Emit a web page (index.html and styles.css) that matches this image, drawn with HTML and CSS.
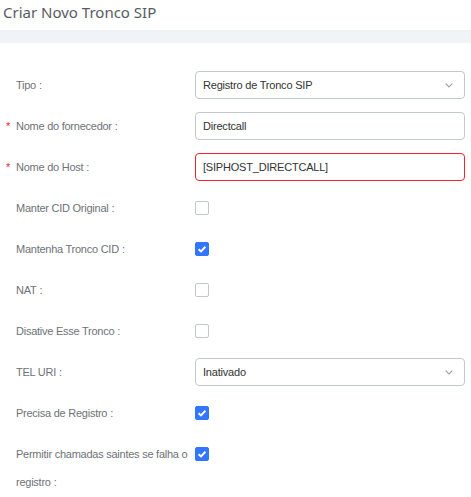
FILE: index.html
```html
<!DOCTYPE html>
<html>
<head>
<meta charset="utf-8">
<link rel="stylesheet" href="styles.css">
</head>
<body>
<div class="page">
  <div class="title">Criar Novo Tronco SIP</div>
  <div class="band"></div>
  <form class="form">
    <div class="row">
      <div class="label">Tipo<span class="colon">:</span></div>
      <div class="control">
        <div class="select"><span>Registro de Tronco SIP</span>
          <svg class="arrow" width="8" height="5" viewBox="0 0 8 5"><path d="M0.7 0.7 L4 4 L7.3 0.7" fill="none" stroke="#9aa0a8" stroke-width="1.1"/></svg>
        </div>
      </div>
    </div>
    <div class="row">
      <div class="label"><span class="req">*</span>Nome do fornecedor<span class="colon">:</span></div>
      <div class="control"><div class="input">Directcall</div></div>
    </div>
    <div class="row">
      <div class="label"><span class="req">*</span>Nome do Host<span class="colon">:</span></div>
      <div class="control"><div class="input error">[SIPHOST_DIRECTCALL]</div></div>
    </div>
    <div class="row">
      <div class="label">Manter CID Original<span class="colon">:</span></div>
      <div class="control"><span class="cb"></span></div>
    </div>
    <div class="row">
      <div class="label">Mantenha Tronco CID<span class="colon">:</span></div>
      <div class="control"><span class="cb on"><svg width="14" height="14" viewBox="0 0 14 14"><path d="M3.6 7.2 L6 9.4 L10.4 4.8" fill="none" stroke="#fff" stroke-width="2"/></svg></span></div>
    </div>
    <div class="row">
      <div class="label">NAT<span class="colon">:</span></div>
      <div class="control"><span class="cb"></span></div>
    </div>
    <div class="row">
      <div class="label">Disative Esse Tronco<span class="colon">:</span></div>
      <div class="control"><span class="cb"></span></div>
    </div>
    <div class="row">
      <div class="label">TEL URI<span class="colon">:</span></div>
      <div class="control">
        <div class="select"><span>Inativado</span>
          <svg class="arrow" width="8" height="5" viewBox="0 0 8 5"><path d="M0.7 0.7 L4 4 L7.3 0.7" fill="none" stroke="#9aa0a8" stroke-width="1.1"/></svg>
        </div>
      </div>
    </div>
    <div class="row">
      <div class="label">Precisa de Registro<span class="colon">:</span></div>
      <div class="control"><span class="cb on"><svg width="14" height="14" viewBox="0 0 14 14"><path d="M3.6 7.2 L6 9.4 L10.4 4.8" fill="none" stroke="#fff" stroke-width="2"/></svg></span></div>
    </div>
    <div class="row top">
      <div class="label">Permitir chamadas saintes se falha o registro<span class="colon">:</span></div>
      <div class="control"><span class="cb on"><svg width="14" height="14" viewBox="0 0 14 14"><path d="M3.6 7.2 L6 9.4 L10.4 4.8" fill="none" stroke="#fff" stroke-width="2"/></svg></span></div>
    </div>
  </form>
</div>
</body>
</html>
```

FILE: styles.css
```css
* { box-sizing: border-box; }
html, body { margin: 0; padding: 0; background: #fff; }
body {
  font-family: "Liberation Sans", Arial, sans-serif;
  font-size: 11px;
  letter-spacing: -0.25px;
  color: #666;
  overflow: hidden;
}
.page { width: 471px; }
.title {
  height: 30px;
  line-height: 24px;
  padding-left: 3px;
  font-family: "Noto Sans", sans-serif;
  font-size: 15px;
  letter-spacing: 0;
  color: #575b62;
}
.band {
  height: 13px;
  background: #f1f4f7;
}
.form {
  margin: 0;
  padding: 28px 0 0 0;
}
.row {
  display: flex;
  align-items: center;
  min-height: 28px;
  margin-bottom: 13px;
}
.row.top { align-items: flex-start; }
.label {
  width: 195px;
  padding-left: 16px;
  padding-right: 2px;
  line-height: 28px;
  color: #6e7277;
}
.req {
  display: inline-block;
  width: 10px;
  margin-left: -10px;
  line-height: 1;
  color: #f5222d;
  font-size: 11px;
}
.colon { margin-left: 3px; }
.control {
  width: 270px;
  display: flex;
  align-items: center;
  min-height: 28px;
}
.select, .input {
  width: 270px;
  height: 28px;
  border: 1px solid #c3c7ce;
  border-radius: 4px;
  padding: 0 7px;
  display: flex;
  align-items: center;
  justify-content: space-between;
  color: #333;
  font-size: 11px;
  letter-spacing: -0.2px;
}
.input.error { border-color: #f5222d; }
.arrow { margin-right: 4px; }
.cb {
  width: 14px;
  height: 14px;
  border: 1px solid #c3c7ce;
  border-radius: 2px;
  display: inline-flex;
  align-items: center;
  justify-content: center;
  background: #fff;
}
.cb.on {
  background: #3275ff;
  border-color: #3275ff;
}
.cb svg { display: block; flex: none; }
```
